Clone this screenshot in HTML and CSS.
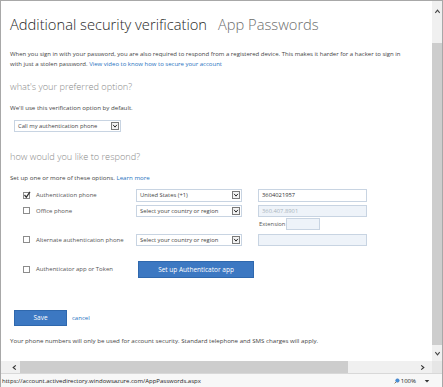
FILE: index.html
```html
<!DOCTYPE html>
<html lang="en">
<head>
    <meta charset="UTF-8">
    <meta name="viewport" content="width=device-width, initial-scale=1.0">
    <title>Additional security verification</title>
    <link rel="stylesheet" href="styles.css">
</head>
<body>
<div class="window">
    <div class="viewport">
        <main class="page">
            <h1><span class="title">Additional security verification</span><span class="tab">App Passwords</span></h1>
            <p class="intro">When you sign in with your password, you are also required to respond from a registered device. This makes it harder for a hacker to sign in with just a stolen password. <a href="#">View video to know how to secure your account</a></p>

            <h2>what's your preferred option?</h2>
            <p class="hint">We'll use this verification option by default.</p>
            <div class="select pref">
                <span>Call my authentication phone</span>
                <span class="drop"><svg viewBox="0 0 8 8" width="6" height="6"><polyline points="1.5,2.5 4,5.5 6.5,2.5" fill="none" stroke="#222" stroke-width="1.3"/></svg></span>
            </div>

            <h2 class="respond">how would you like to respond?</h2>
            <p class="hint">Set up one or more of these options. <a href="#">Learn more</a></p>

            <div class="options">
                <div class="option">
                    <label class="check"><span class="box"><svg viewBox="0 0 8 8" width="8" height="8"><polyline points="1.5,4 3.3,6.2 7,0.8" fill="none" stroke="#333" stroke-width="1.2"/></svg></span>Authentication phone</label>
                    <div class="select">
                        <span>United States (+1)</span>
                        <span class="drop"><svg viewBox="0 0 8 8" width="6" height="6"><polyline points="1.5,2.5 4,5.5 6.5,2.5" fill="none" stroke="#222" stroke-width="1.3"/></svg></span>
                    </div>
                    <input class="field" type="text" value="3604021957">
                </div>
                <div class="option second">
                    <label class="check"><span class="box"></span>Office phone</label>
                    <div class="select">
                        <span>Select your country or region</span>
                        <span class="drop"><svg viewBox="0 0 8 8" width="6" height="6"><polyline points="1.5,2.5 4,5.5 6.5,2.5" fill="none" stroke="#222" stroke-width="1.3"/></svg></span>
                    </div>
                    <input class="field off" type="text" placeholder="360.407.8901">
                </div>
                <div class="option extension">
                    <span></span>
                    <span></span>
                    <label class="ext">Extension<input class="field off short" type="text"></label>
                </div>
                <div class="option third">
                    <label class="check"><span class="box"></span>Alternate authentication phone</label>
                    <div class="select">
                        <span>Select your country or region</span>
                        <span class="drop"><svg viewBox="0 0 8 8" width="6" height="6"><polyline points="1.5,2.5 4,5.5 6.5,2.5" fill="none" stroke="#222" stroke-width="1.3"/></svg></span>
                    </div>
                    <input class="field off" type="text">
                </div>
                <div class="option app">
                    <label class="check"><span class="box"></span>Authenticator app or Token</label>
                    <button class="btn setup">Set up Authenticator app</button>
                </div>
            </div>

            <div class="actions">
                <button class="btn save">Save</button>
                <a href="#">cancel</a>
            </div>
            <p class="hint note">Your phone numbers will only be used for account security. Standard telephone and SMS charges will apply.</p>
        </main>
        <div class="vscroll">
            <div class="arrow up"><svg viewBox="0 0 8 8" width="7" height="7"><polyline points="1.5,5.5 4,2.5 6.5,5.5" fill="none" stroke="#444" stroke-width="1.2"/></svg></div>
            <div class="track-gap"></div>
            <div class="thumb"></div>
            <div class="arrow down"><svg viewBox="0 0 8 8" width="7" height="7"><polyline points="1.5,2.5 4,5.5 6.5,2.5" fill="none" stroke="#444" stroke-width="1.2"/></svg></div>
        </div>
    </div>
    <div class="hscroll">
        <div class="arrow left"><svg viewBox="0 0 8 8" width="7" height="7"><polyline points="5.5,1.5 2.5,4 5.5,6.5" fill="none" stroke="#333" stroke-width="1.3"/></svg></div>
        <div class="hthumb"></div>
        <div class="htrack"></div>
        <div class="arrow right"><svg viewBox="0 0 8 8" width="7" height="7"><polyline points="2.5,1.5 5.5,4 2.5,6.5" fill="none" stroke="#333" stroke-width="1.3"/></svg></div>
        <div class="corner"></div>
    </div>
    <footer class="status">
        <span class="url">https://account.activedirectory.windowsazure.com/AppPasswords.aspx</span>
        <svg class="magnifier" viewBox="0 0 8 8" width="6" height="6"><circle cx="4.6" cy="3.4" r="2.4" fill="#4a90d9" stroke="#2a6cb5" stroke-width="0.6"/><line x1="2.8" y1="5.2" x2="0.8" y2="7.2" stroke="#8a6a3a" stroke-width="1.2"/></svg>
        <span class="zoom">100%</span>
        <svg class="caret" viewBox="0 0 8 8" width="6" height="6"><polygon points="1,2.5 7,2.5 4,6" fill="#333"/></svg>
    </footer>
</div>
</body>
</html>
```

FILE: styles.css
```css
* {
    box-sizing: border-box;
}
body {
    margin: 0;
    width: 443px;
    height: 387px;
    overflow: hidden;
    font-family: "Open Sans", "Liberation Sans", sans-serif;
    color: #444;
    background-color: #fff;
}
a {
    color: #2672c0;
    text-decoration: none;
}
.window {
    width: 443px;
    height: 387px;
    border: 1px solid #a8a8a8;
    border-bottom: none;
    display: flex;
    flex-direction: column;
}
.viewport {
    height: 360px;
    display: flex;
}
.page {
    flex: 1;
    padding: 13px 0 0 9px;
    overflow: hidden;
}
h1 {
    margin: 0;
    font-size: 14.7px;
    font-weight: 300;
    line-height: 20px;
    white-space: nowrap;
}
.title {
    color: #262626;
    margin-right: 11px;
}
.tab {
    color: #6d6d6d;
}
p {
    margin: 0;
}
.intro {
    margin-top: 16px;
    width: 404px;
    font-size: 6px;
    line-height: 9.8px;
}
h2 {
    margin: 11px 0 0;
    font-size: 9.2px;
    font-weight: 300;
    line-height: 12px;
    color: #8a8a8a;
}
h2.respond {
    margin-top: 19px;
}
.hint {
    margin-top: 10px;
    font-size: 6.15px;
    line-height: 9px;
}
.select {
    display: flex;
    align-items: center;
    justify-content: space-between;
    width: 106px;
    height: 12px;
    padding: 0 1px 0 3px;
    border: 1px solid #c8d4e2;
    font-size: 5.8px;
    color: #444;
}
.select.pref {
    width: 107px;
    margin: 8px 0 0 4px;
}
.drop {
    display: flex;
    align-items: center;
    justify-content: center;
    width: 8px;
    height: 8px;
    border: 1px solid #7a7a7a;
    background-color: #f3f3f3;
}
.options {
    margin: 7px 0 0 13px;
    display: flex;
    flex-direction: column;
}
.option {
    display: grid;
    grid-template-columns: 113px 122px 109px;
    align-items: center;
    height: 13px;
}
.option.second {
    margin-top: 3px;
    height: 12px;
}
.option.extension {
    margin-top: 1px;
    height: 12px;
}
.option.third {
    margin-top: 4px;
    height: 12px;
}
.option.app {
    margin-top: 15px;
    height: 17px;
}
.option .select {
    height: 100%;
}
.check {
    display: flex;
    align-items: center;
    font-size: 6px;
    color: #555;
}
.box {
    width: 7px;
    height: 7px;
    margin-right: 6px;
    border: 1px solid #8c8c8c;
    position: relative;
}
.box svg {
    position: absolute;
    left: -1px;
    top: -2px;
}
.field {
    width: 109px;
    height: 100%;
    margin: 0;
    padding: 0 3px;
    border: 1px solid #c8d4e2;
    font-family: inherit;
    font-size: 5.8px;
    color: #333;
    background-color: #fff;
    outline: none;
}
.field.off {
    background-color: #eef3f9;
}
.field::placeholder {
    color: #aab3bd;
}
.ext {
    display: flex;
    align-items: center;
    height: 100%;
    padding-left: 1px;
    font-size: 5.8px;
    color: #555;
}
.field.short {
    width: 34px;
    margin-left: 1px;
}
.btn {
    border: 1px solid #2f68ad;
    background-color: #3c78c2;
    color: #fff;
    font-family: inherit;
    padding: 0;
    cursor: pointer;
}
.setup {
    width: 116px;
    height: 17px;
    margin-left: 2px;
    font-size: 6.5px;
}
.actions {
    margin: 32px 0 0 4px;
    display: flex;
    align-items: center;
    font-size: 6px;
}
.save {
    width: 53px;
    height: 16px;
    margin-right: 5px;
    font-size: 6.5px;
}
.note {
    margin-top: 10px;
}
.vscroll {
    width: 10px;
    display: flex;
    flex-direction: column;
    background-color: #f0f0f0;
}
.vscroll .arrow {
    display: flex;
    align-items: center;
    justify-content: center;
}
.up {
    height: 20px;
}
.track-gap {
    height: 22px;
}
.thumb {
    height: 302px;
    background-color: #cdcdcd;
}
.down {
    flex: 1;
}
.hscroll {
    height: 12px;
    display: flex;
    background-color: #f0f0f0;
}
.hscroll .arrow {
    display: flex;
    align-items: center;
    justify-content: center;
    width: 19px;
}
.hscroll .left {
    justify-content: flex-end;
    padding-right: 2px;
}
.hthumb {
    width: 328px;
    background-color: #cdcdcd;
}
.htrack {
    flex: 1;
}
.corner {
    width: 10px;
    background-color: #e6e6e6;
}
.status {
    height: 14px;
    display: flex;
    align-items: center;
    padding: 0 12px 0 1px;
    border-top: 1px solid #d8d8d8;
    background-color: #f7f7f7;
    font-size: 6px;
    color: #222;
}
.url {
    flex: 1;
}
.magnifier {
    margin-right: 1px;
}
.zoom {
    margin-right: 8px;
}
```
